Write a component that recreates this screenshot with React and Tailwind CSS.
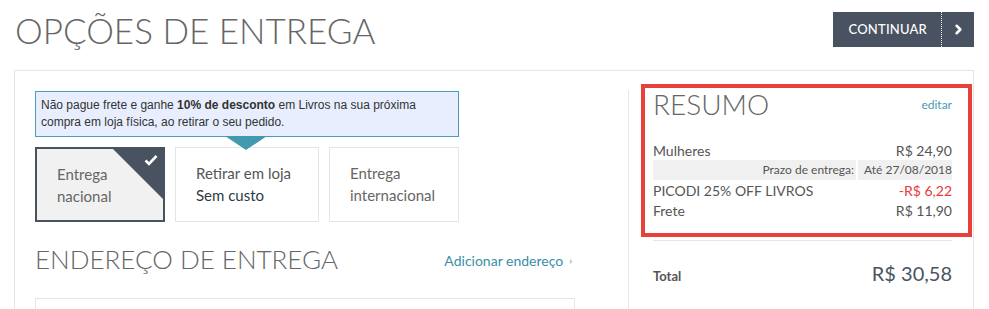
import { ChevronRight } from 'lucide-react'

const lato = { fontFamily: 'Lato, "Open Sans", sans-serif' }

function OptionCard({ selected, children, className }) {
  return (
    <div
      className={
        'relative h-[75px] pl-[20px] pt-[14px] text-[15px] leading-[22px] ' +
        (selected
          ? 'border-2 border-[#485261] bg-[#f1f1f1] pl-[19px] pt-[13px] '
          : 'border border-[#e5e5e5] bg-white ') +
        className
      }
    >
      {selected ? (
        <div className="absolute right-0 top-0 h-0 w-0 border-l-[50px] border-t-[50px] border-l-transparent border-t-[#485261]">
          <svg
            className="absolute -top-[45px] right-[5px]"
            width="14"
            height="12"
            viewBox="0 0 14 12"
          >
            <path d="M1.5 6.5 L5 10 L12.5 2" fill="none" stroke="white" strokeWidth="2.6" />
          </svg>
        </div>
      ) : null}
      {children}
    </div>
  )
}

function SummaryRow({ label, value, valueClass }) {
  return (
    <div className="flex h-[20px] items-center justify-between text-[14px] text-[#555]">
      <span>{label}</span>
      <span className={valueClass}>{value}</span>
    </div>
  )
}

export default function App() {
  return (
    <div className="h-[309px] overflow-hidden bg-white px-[14px]" style={lato}>
      <div className="w-[960px]">
        <div className="flex h-[70px] items-start justify-between pt-[12px]">
          <h1 className="pl-[1px] pt-[1px] text-[35px] font-light leading-none text-[#666]">
            OPÇÕES DE ENTREGA
          </h1>
          <button className="flex h-[35px] items-center bg-[#485261] text-white">
            <span className="pl-[16px] pr-[14px] text-[13px] font-medium tracking-[0.2px]">CONTINUAR</span>
            <span className="flex h-full w-[33px] items-center justify-center border-l border-dotted border-white">
              <ChevronRight size={15} strokeWidth={4} />
            </span>
          </button>
        </div>

        <div className="flex h-[260px] border-x border-t border-[#e6e6e6]">
          <div className="w-[613px] pl-[20px] pt-[20px]">
            <div className="relative w-[424px] border border-[#4a9fb4] bg-[#e8eefe] px-[5px] py-[5px] text-[12px] leading-[17px] text-[#333]" style={{ fontFamily: '"Liberation Sans", Arial, sans-serif' }}>
              Não pague frete e ganhe <b>10% de desconto</b> em Livros na sua próxima compra em loja física, ao retirar o seu pedido.
              <div className="absolute left-[189px] top-full z-10 h-0 w-0 border-x-[21px] border-t-[14px] border-x-transparent border-t-[#4399ae]" />
            </div>

            <div className="mt-[10px] flex gap-[10px]">
              <OptionCard selected className="w-[130px] text-[#666]">
                Entrega
                <br />
                nacional
              </OptionCard>
              <OptionCard className="w-[144px] text-[#555]">
                Retirar em loja
                <br />
                <span className="text-[#2d3a45]">Sem custo</span>
              </OptionCard>
              <OptionCard className="w-[130px] text-[#666]">
                Entrega
                <br />
                internacional
              </OptionCard>
            </div>

            <div className="mt-[24px] flex w-[540px] items-end justify-between">
              <h2 className="text-[26px] font-light leading-none text-[#666]">ENDEREÇO DE ENTREGA</h2>
              <a className="mb-[1px] mr-[3px] flex items-center text-[14px] text-[#3a8fa5]">
                Adicionar endereço
                <span className="ml-[6px] text-[10px]">›</span>
              </a>
            </div>

            <div className="mt-[26px] h-[40px] w-[540px] border border-[#e6e6e6]" />
          </div>

          <div className="relative mt-[19px] w-[345px] border-l border-[#e6e6e6] pl-[24px] pr-[21px]">
            <div className="flex items-end justify-between">
              <h2 className="text-[28px] font-light leading-none text-[#666]">RESUMO</h2>
              <a className="mb-[4px] text-[12px] text-[#4a9ab0]">editar</a>
            </div>
            <div className="mt-[22px]">
              <SummaryRow label="Mulheres" value="R$ 24,90" />
              <div className="flex h-[20px] gap-[2px] text-[12px] text-[#555]">
                <div className="flex flex-1 items-center justify-end bg-[#f0f0f0] pr-[2px]">Prazo de entrega:</div>
                <div className="flex w-[94px] items-center justify-end bg-[#f0f0f0]">Até 27/08/2018</div>
              </div>
              <SummaryRow label="PICODI 25% OFF LIVROS" value="-R$ 6,22" valueClass="text-[#e8373a]" />
              <SummaryRow label="Frete" value="R$ 11,90" />
            </div>
            <div className="mt-[20px] border-t border-[#e6e6e6]" />
            <div className="mt-[22px] flex items-baseline justify-between">
              <span className="text-[13px] font-bold text-[#555]">Total</span>
              <span className="text-[20px] leading-none text-[#4a5463]">R$ 30,58</span>
            </div>

            <div className="pointer-events-none absolute left-[12px] top-[-6px] h-[153px] w-[331px] border-4 border-[#e9413a]" />
          </div>
        </div>
      </div>
    </div>
  )
}
